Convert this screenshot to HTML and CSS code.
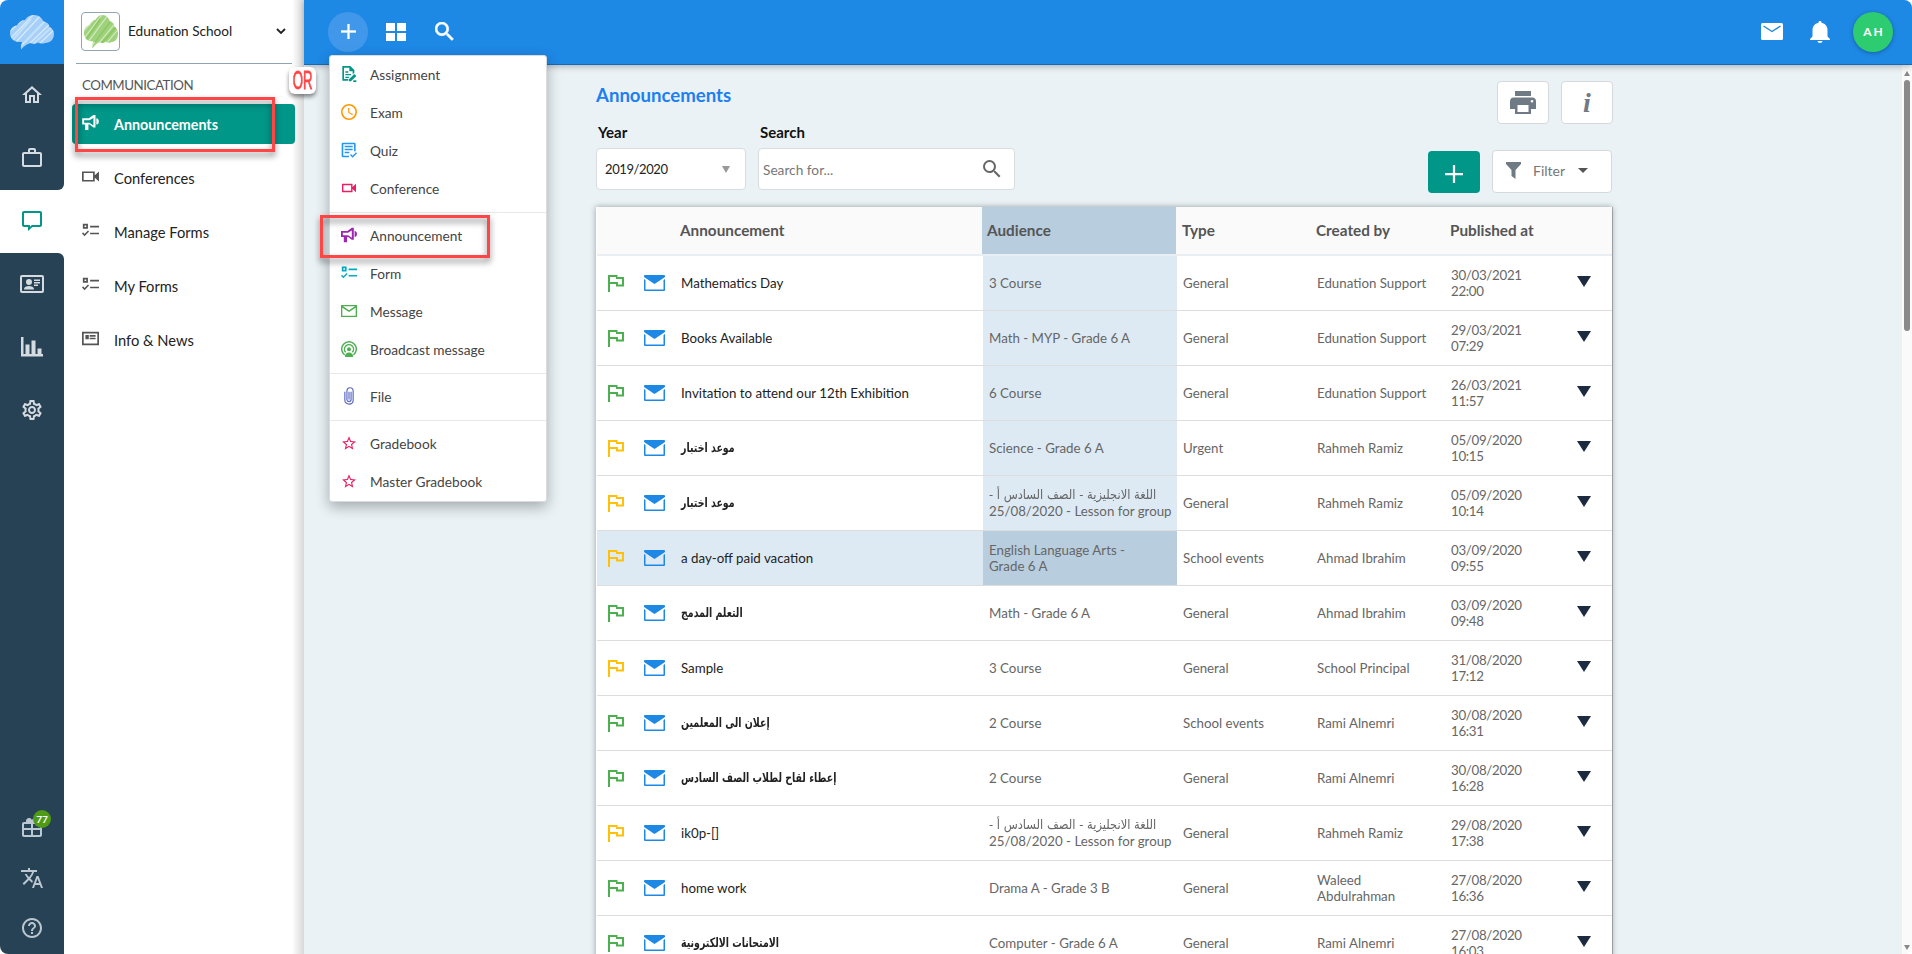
FILE: index.html
```
<!DOCTYPE html>
<html lang="en">
<head>
<meta charset="utf-8">
<title>Announcements</title>
<link rel="stylesheet" href="styles.css">
</head>
<body>
<svg class="defs" aria-hidden="true">
  <clipPath id="cloud-clip"><path d="M9 27C4 27 0 23 0 18.500C0 14 3 11 7 10.500C9 7 12 5 15 5C17 1.500 20 0 24 0C29 0 32 3 33.500 6.500C37 7 39 9 39.500 12C42.500 13.500 44 16 44 19C44 24 40.500 28 35 28C33 29 30 28.500 28 27.500C25 29.500 22 28.500 20 28C17 29 14.500 30.500 11 34.500C10.500 31 11.500 29 12 27Z"/></clipPath>
  <symbol id="cloud" viewBox="0 0 44 35" preserveAspectRatio="none"><g clip-path="url(#cloud-clip)"><path d="M0 0h44v35H0z" opacity=".82"/><path d="M-2 18L16 2M0 24L24 -1M6 27L31 0M8 34L38 3M17 31L41 8M28 30L45 14" fill="none" stroke="#fff" stroke-opacity=".55" stroke-width="1.300"/><path d="M3 25L21 4M14 28L36 5M23 29L43 11" fill="none" stroke="currentColor" stroke-width="2"/></g></symbol>
  <symbol id="home" viewBox="0 0 24 24"><path d="M12 5.700l5 4.500V18h-2v-6H9v6H7v-7.800l5-4.500M12 3L2 12h3v8h6v-6h2v6h6v-8h3L12 3z"/></symbol>
  <symbol id="case" viewBox="0 0 24 24"><path d="M14 6V4h-4v2h4zM4 8v11h16V8H4zm16-2c1.100 0 2 .900 2 2v11c0 1.100-.900 2-2 2H4c-1.100 0-2-.900-2-2V8c0-1.100.900-2 2-2h4V4c0-1.100.900-2 2-2h4c1.100 0 2 .900 2 2v2h4z"/></symbol>
  <symbol id="chat" viewBox="0 0 24 24"><path d="M20 2H4c-1.100 0-2 .900-2 2v12c0 1.100.900 2 2 2h4v4l4.500-4H20c1.100 0 2-.900 2-2V4c0-1.100-.900-2-2-2zm0 14h-8.200L10 17.800V16H4V4h16v12z"/></symbol>
  <symbol id="card" viewBox="0 0 24 20"><path fill-rule="evenodd" d="M2 1h20a2 2 0 0 1 2 2v14a2 2 0 0 1-2 2H2a2 2 0 0 1-2-2V3a2 2 0 0 1 2-2zm0 2v14h20V3zM9 5a3 3 0 1 1 0 6 3 3 0 0 1 0-6zM4 15c0-2 2.500-3 5-3s5 1 5 3v.500H4zM14 5.500h6V7h-6zm0 2.500h6v1.500h-6zm0 2.500h4V12h-4z"/></symbol>
  <symbol id="chart" viewBox="0 0 22 20"><path d="M0 0h2.500v17H4.500V7.500h4V17h2V3.500h4V17h2v-5.500h4V17H22v2.500H0z"/></symbol>
  <symbol id="gear" viewBox="0 0 24 24"><path d="M19.430 12.980c.040-.320.070-.640.070-.980s-.030-.660-.070-.980l2.110-1.650c.190-.150.240-.420.120-.640l-2-3.460c-.120-.220-.390-.300-.610-.220l-2.490 1c-.520-.400-1.080-.730-1.690-.980l-.380-2.650C14.460 2.180 14.250 2 14 2h-4c-.250 0-.460.180-.490.420l-.380 2.650c-.610.250-1.170.590-1.690.980l-2.490-1c-.230-.090-.490 0-.610.220l-2 3.460c-.130.220-.070.490.120.640l2.110 1.650c-.040.320-.070.650-.070.980s.030.660.070.980l-2.110 1.650c-.190.150-.240.420-.120.640l2 3.460c.120.220.390.300.610.220l2.490-1c.520.400 1.080.730 1.690.980l.380 2.650c.030.240.240.420.490.420h4c.250 0 .460-.180.490-.420l.380-2.650c.610-.250 1.170-.590 1.690-.980l2.490 1c.230.090.490 0 .610-.220l2-3.460c.120-.220.070-.490-.120-.640l-2.110-1.650zm-1.980-1.710c.040.310.050.520.050.730s-.020.430-.050.730l-.140 1.130.890.700 1.080.840-.700 1.210-1.270-.510-1.040-.420-.900.680c-.430.320-.840.560-1.250.730l-1.060.430-.160 1.130-.200 1.350h-1.400l-.350-2.480-1.060-.430c-.430-.180-.830-.410-1.230-.710l-.910-.700-1.060.430-1.270.510-.700-1.210 1.970-1.540-.140-1.130c-.030-.310-.050-.540-.050-.740s.020-.430.050-.730l.140-1.130-1.970-1.540.700-1.210 2.330.930.900-.680c.430-.320.840-.560 1.250-.730l1.060-.430.350-2.480h1.390l.350 2.480 1.060.430c.430.180.830.410 1.230.710l.910.700 2.330-.940.700 1.210-1.970 1.550.140 1.130zM12 8c-2.210 0-4 1.790-4 4s1.790 4 4 4 4-1.790 4-4-1.790-4-4-4zm0 6c-1.100 0-2-.900-2-2s.900-2 2-2 2 .900 2 2-.900 2-2 2z"/></symbol>
  <symbol id="gift" viewBox="0 0 24 24"><path d="M20 6h-2.180c.110-.310.180-.650.180-1a2.996 2.996 0 0 0-5.500-1.650l-.500.670-.500-.680C10.960 2.540 10.050 2 9 2 7.340 2 6 3.340 6 5c0 .350.070.690.180 1H4c-1.110 0-1.990.890-1.990 2L2 19c0 1.110.890 2 2 2h16c1.110 0 2-.890 2-2V8c0-1.110-.890-2-2-2zM4 8h7v4H4zm0 6h7v5H4zm16 5h-7v-5h7zm0-7h-7V8h7z"/></symbol>
  <symbol id="translate" viewBox="0 0 24 24"><path d="M12.870 15.070l-2.540-2.510.030-.030A17.520 17.520 0 0 0 14.070 6H17V4h-7V2H8v2H1v1.990h11.170C11.500 7.920 10.440 9.750 9 11.350 8.070 10.320 7.300 9.190 6.690 8h-2c.730 1.630 1.730 3.170 2.980 4.560l-5.090 5.020L4 19l5-5 3.110 3.110.760-2.040zM18.500 10h-2L12 22h2l1.120-3h4.750L21 22h2l-4.500-12zm-2.620 7l1.620-4.330L19.120 17h-3.240z"/></symbol>
  <symbol id="help" viewBox="0 0 24 24"><path d="M11 18h2v-2h-2v2zm1-16C6.480 2 2 6.480 2 12s4.480 10 10 10 10-4.480 10-10S17.520 2 12 2zm0 18c-4.410 0-8-3.590-8-8s3.590-8 8-8 8 3.590 8 8-3.590 8-8 8zm0-14c-2.210 0-4 1.790-4 4h2c0-1.100.900-2 2-2s2 .900 2 2c0 2-3 1.750-3 5h2c0-2.250 3-2.500 3-5 0-2.210-1.790-4-4-4z"/></symbol>
  <symbol id="horn" viewBox="0 0 20 18"><path fill-rule="evenodd" d="M0 4h8l5.500-4H16v15h-2.500L9 11.500H7.500V18h-4v-6.500H0zm2.300 2.300v3h6.500l4.700 3.200v-9L8.800 6.300zM17 4c4 0 4 7.500 0 7.500z"/></symbol>
  <symbol id="video" viewBox="0 0 20 14"><path fill-rule="evenodd" d="M0 1h15v4.500L20 1v12l-5-4.500V13H0zm2 2v8h11V3z"/></symbol>
  <symbol id="list" viewBox="0 0 20 16"><path fill-rule="evenodd" d="M1 0h6v6H1zm2 2v2h2V2zM9.500 2.500H20v2H9.500zm0 8H20v2H9.500zM0 11.500l1.300-1.300L3 12l4-4 1.300 1.300L3 14.700z"/></symbol>
  <symbol id="news" viewBox="0 0 20 16"><path fill-rule="evenodd" d="M0 0h20v16H0zm2 2v12h16V2zm2 2h4v5H4zm5 0h7v2H9zm0 3h7v2H9z"/></symbol>
  <symbol id="assign" viewBox="0 0 24 24"><path fill-rule="evenodd" d="M2 0h12l6 6v4l-2.500 2.500V8h-5V2.500h-8v17H11V22H2zm4.500 8H11v2H6.500zm0 4H15v2H6.500zm0 4H12v2H6.500zM12 20l8-8 3 3-8 8h-3zm7 1.500h4V24h-5z"/></symbol>
  <symbol id="clock" viewBox="0 0 24 24"><path d="M12 0a12 12 0 1 0 0 24 12 12 0 0 0 0-24zm0 21.600a9.600 9.600 0 1 1 0-19.200 9.600 9.600 0 0 1 0 19.200zM12.600 6h-1.800v7.200l6.200 3.800.900-1.500-5.300-3.200V6z"/></symbol>
  <symbol id="quiz" viewBox="0 0 24 24"><path fill-rule="evenodd" d="M3 1h17a2 2 0 0 1 2 2v11h-2.400V3.400H3.400v17.200H12V23H3a2 2 0 0 1-2-2V3a2 2 0 0 1 2-2zm2.500 4.500h12v2.200h-12zm0 4.500h12v2.200h-12zm0 4.500h7v2.200h-7zM13.500 19.500l1.500-1.500 2.500 2.500 5-5L24 17l-6.500 6.500z"/></symbol>
  <symbol id="mailo" viewBox="0 0 24 20"><path d="M0 1h24v18H0zm2 4v12h20V5l-10 6.500zm1-2l9 6 9-6z" fill-rule="evenodd"/></symbol>
  <symbol id="cast" viewBox="0 0 24 24"><path d="M5.500 21A11 11 0 1 1 18.500 21M7 17a6.800 6.800 0 1 1 10 0" fill="none" stroke="currentColor" stroke-width="2.200"/><circle cx="12" cy="12.500" r="3"/><path d="M6 24c-1-9 13-9 12 0z"/></symbol>
  <symbol id="clip" viewBox="0 0 14 26"><path d="M10 7v11c0 4-6 4-6 0V6c0-6.500 9-6.500 9 0v13c0 7.500-12 7.500-12 0V7M7 7v11" fill="none" stroke="currentColor" stroke-width="1.700"/></symbol>
  <symbol id="star" viewBox="2 2 20 19"><path d="M22 9.240l-7.190-.620L12 2 9.190 8.630 2 9.240l5.460 4.730L5.820 21 12 17.270 18.180 21l-1.630-7.030L22 9.240zM12 15.400l-3.760 2.270 1-4.280-3.320-2.880 4.380-.380L12 6.100l1.710 4.040 4.380.380-3.320 2.880 1 4.280L12 15.400z"/></symbol>
  <symbol id="search" viewBox="0 0 18 18"><path d="M12.500 11h-.790l-.280-.270A6.470 6.470 0 0 0 13 6.500 6.500 6.500 0 1 0 6.500 13c1.610 0 3.090-.590 4.230-1.570l.270.280v.790l5 4.990L17.490 16l-4.990-5zm-6 0a4.500 4.500 0 1 1 0-9 4.500 4.500 0 0 1 0 9z"/></symbol>
  <symbol id="plus" viewBox="0 0 16 16"><path d="M7 0h2v7h7v2H9v7H7V9H0V7h7z"/></symbol>
  <symbol id="flag" viewBox="0 0 16 17"><path fill-rule="evenodd" d="M0 0h9.500v2H16v9.500H8V9H2v8H0zm2 2v5h8v2.500h4V4H8V2z"/></symbol>
  <symbol id="mail" viewBox="0 0 21 16"><path d="M1 0h19a1 1 0 0 1 1 1v1L10.500 9 0 2V1a1 1 0 0 1 1-1zM0 4l1.500 1v9.500h18V5L21 4v11a1 1 0 0 1-1 1H1a1 1 0 0 1-1-1z"/></symbol>
</svg>
<div class="app">
  <nav class="rail">
    <div class="brand"><svg class="brand-cloud"><use href="#cloud"/></svg></div>
    <div class="rail-top"><a><svg><use href="#home"/></svg></a><a><svg><use href="#case"/></svg></a></div>
    <div class="rail-active"><svg><use href="#chat"/></svg></div>
    <div class="rail-rest">
      <a><svg><use href="#card"/></svg></a><a><svg class="i22"><use href="#chart"/></svg></a><a><svg><use href="#gear"/></svg></a>
      <div class="rail-foot">
        <a><svg><use href="#gift"/></svg><span class="count">77</span></a><a><svg><use href="#translate"/></svg></a><a><svg><use href="#help"/></svg></a>
      </div>
    </div>
  </nav>
  <aside class="side">
    <div class="school"><span class="school-logo"><svg><use href="#cloud"/></svg></span><span class="school-name">Edunation School</span>
      <svg class="chev" viewBox="0 0 10 7"><path d="M1 1l4 4 4-4" fill="none" stroke="#222" stroke-width="1.800"/></svg></div>
    <h2>COMMUNICATION</h2>
    <a class="nav on"><svg><use href="#horn"/></svg><span>Announcements</span></a>
    <a class="nav"><svg><use href="#video"/></svg><span>Conferences</span></a>
    <a class="nav"><svg><use href="#list"/></svg><span>Manage Forms</span></a>
    <a class="nav"><svg><use href="#list"/></svg><span>My Forms</span></a>
    <a class="nav"><svg><use href="#news"/></svg><span>Info &amp; News</span></a>
  </aside>
  <div class="main">
    <header class="top">
      <span class="round"><svg><use href="#plus"/></svg></span>
      <svg class="tiles" viewBox="0 0 20 18"><path d="M0 0h9v8H0zM11 0h9v8h-9zM0 10h9v8H0zM11 10h9v8h-9z"/></svg>
      <svg class="find"><use href="#search"/></svg>
      <svg class="tmail" viewBox="0 0 22 17"><rect width="22" height="17" rx="1.500" fill="#fff"/><path d="M2.500 3l8.500 5.500L19.500 3" fill="none" stroke="#1e88e5" stroke-width="1.400"/></svg>
      <svg class="bell" viewBox="0 0 20 22"><path d="M10 0c1 0 1.500.700 1.500 1.700 4 .8 6 3.800 6 7.300v6.500L20 18v1H0v-1l2.500-2.500V9c0-3.500 2-6.500 6-7.300C8.500.700 9 0 10 0zM7.500 20h5c0 2.500-5 2.500-5 0z"/></svg>
      <span class="avatar">AH</span>
    </header>
    <div class="content">
      <div class="page">
        <div class="titlebar"><h1>Announcements</h1>
          <span class="btn"><svg class="printer" viewBox="0 0 26 23"><path fill-rule="evenodd" d="M5 0h16v5H5zM4 6.500h18a4 4 0 0 1 4 4V18h-5v5H5v-5H0v-7.500a4 4 0 0 1 4-4zM7.500 14v7h11v-7zM22 9a1.300 1.300 0 1 0 0 2.600A1.300 1.300 0 0 0 22 9z"/></svg></span>
          <span class="btn info">i</span></div>
        <div class="tools">
          <label class="year"><b>Year</b><span class="field">2019/2020<i class="tri"></i></span></label>
          <label class="query"><b>Search</b><span class="field">Search for...<svg><use href="#search"/></svg></span></label>
          <span class="add"><svg><use href="#plus"/></svg></span>
          <span class="filter"><svg viewBox="0 0 15 17"><path d="M0 0h15v2L9.500 8v9L5.500 14V8L0 2z"/></svg>Filter<i></i></span>
        </div>
        <div class="table">
          <div class="row head"><span></span><span></span><span class="name">Announcement</span><span class="aud">Audience</span><span>Type</span><span>Created by</span><span>Published at</span><span></span></div>
          <div class="row hl"><svg class="flag"><use href="#flag"/></svg><svg class="mail"><use href="#mail"/></svg><span class="name">Mathematics Day</span><span class="aud">3 Course</span><span>General</span><span>Edunation Support</span><span class="date">30/03/2021<br>22:00</span><i></i></div>
          <div class="row hl"><svg class="flag"><use href="#flag"/></svg><svg class="mail"><use href="#mail"/></svg><span class="name">Books Available</span><span class="aud">Math - MYP - Grade 6 A</span><span>General</span><span>Edunation Support</span><span class="date">29/03/2021<br>07:29</span><i></i></div>
          <div class="row hl"><svg class="flag"><use href="#flag"/></svg><svg class="mail"><use href="#mail"/></svg><span class="name">Invitation to attend our 12th Exhibition</span><span class="aud">6 Course</span><span>General</span><span>Edunation Support</span><span class="date">26/03/2021<br>11:57</span><i></i></div>
          <div class="row hl"><svg class="flag amber"><use href="#flag"/></svg><svg class="mail"><use href="#mail"/></svg><span class="name"><b class="ar">موعد اختبار</b></span><span class="aud">Science - Grade 6 A</span><span>Urgent</span><span>Rahmeh Ramiz</span><span class="date">05/09/2020<br>10:15</span><i></i></div>
          <div class="row hl"><svg class="flag amber"><use href="#flag"/></svg><svg class="mail"><use href="#mail"/></svg><span class="name"><b class="ar">موعد اختبار</b></span><span class="aud"><span class="ar" dir="rtl">اللغة الانجليزية - الصف السادس أ -</span><span>25/08/2020 - Lesson for group</span></span><span>General</span><span>Rahmeh Ramiz</span><span class="date">05/09/2020<br>10:14</span><i></i></div>
          <div class="row sel"><svg class="flag amber"><use href="#flag"/></svg><svg class="mail"><use href="#mail"/></svg><span class="name">a day-off paid vacation</span><span class="aud"><span>English Language Arts -</span><span>Grade 6 A</span></span><span>School events</span><span>Ahmad Ibrahim</span><span class="date">03/09/2020<br>09:55</span><i></i></div>
          <div class="row"><svg class="flag"><use href="#flag"/></svg><svg class="mail"><use href="#mail"/></svg><span class="name"><b class="ar">التعلم المدمج</b></span><span class="aud">Math - Grade 6 A</span><span>General</span><span>Ahmad Ibrahim</span><span class="date">03/09/2020<br>09:48</span><i></i></div>
          <div class="row"><svg class="flag amber"><use href="#flag"/></svg><svg class="mail"><use href="#mail"/></svg><span class="name">Sample</span><span class="aud">3 Course</span><span>General</span><span>School Principal</span><span class="date">31/08/2020<br>17:12</span><i></i></div>
          <div class="row"><svg class="flag"><use href="#flag"/></svg><svg class="mail"><use href="#mail"/></svg><span class="name"><b class="ar">إعلان الى المعلمين</b></span><span class="aud">2 Course</span><span>School events</span><span>Rami Alnemri</span><span class="date">30/08/2020<br>16:31</span><i></i></div>
          <div class="row"><svg class="flag"><use href="#flag"/></svg><svg class="mail"><use href="#mail"/></svg><span class="name"><b class="ar">إعطاء لقاح لطلاب الصف السادس</b></span><span class="aud">2 Course</span><span>General</span><span>Rami Alnemri</span><span class="date">30/08/2020<br>16:28</span><i></i></div>
          <div class="row"><svg class="flag amber"><use href="#flag"/></svg><svg class="mail"><use href="#mail"/></svg><span class="name">ik0p-[]</span><span class="aud"><span class="ar" dir="rtl">اللغة الانجليزية - الصف السادس أ -</span><span>25/08/2020 - Lesson for group</span></span><span>General</span><span>Rahmeh Ramiz</span><span class="date">29/08/2020<br>17:38</span><i></i></div>
          <div class="row"><svg class="flag"><use href="#flag"/></svg><svg class="mail"><use href="#mail"/></svg><span class="name">home work</span><span class="aud">Drama A - Grade 3 B</span><span>General</span><span>Waleed<br>Abdulrahman</span><span class="date">27/08/2020<br>16:36</span><i></i></div>
          <div class="row"><svg class="flag"><use href="#flag"/></svg><svg class="mail"><use href="#mail"/></svg><span class="name"><b class="ar">الامتحانات الالكترونية</b></span><span class="aud">Computer - Grade 6 A</span><span>General</span><span>Rami Alnemri</span><span class="date">27/08/2020<br>16:03</span><i></i></div>
        </div>
      </div>
      <div class="scroll"><i class="up"></i><i class="thumb"></i><i class="down"></i></div>
    </div>
  </div>
</div>
<div class="menu">
  <a class="teal"><svg><use href="#assign"/></svg>Assignment</a>
  <a class="orange"><svg><use href="#clock"/></svg>Exam</a>
  <a class="blue"><svg><use href="#quiz"/></svg>Quiz</a>
  <a class="pink"><svg class="small"><use href="#video"/></svg>Conference</a>
  <hr>
  <a class="purple"><svg><use href="#horn"/></svg>Announcement</a>
  <a class="cyan"><svg><use href="#list"/></svg>Form</a>
  <a class="green"><svg><use href="#mailo"/></svg>Message</a>
  <a class="green"><svg><use href="#cast"/></svg>Broadcast message</a>
  <hr>
  <a class="indigo"><svg class="tall"><use href="#clip"/></svg>File</a>
  <hr>
  <a class="pink"><svg class="small"><use href="#star"/></svg>Gradebook</a>
  <a class="pink"><svg class="small"><use href="#star"/></svg>Master Gradebook</a>
</div>
<div class="mark mark-side"></div>
<div class="mark mark-menu"></div>
<div class="or"><span>OR</span></div>
</body>
</html>
```

FILE: styles.css
```
* { box-sizing: border-box; }
body { margin: 0; width: 1912px; height: 954px; overflow: hidden; font-family: Lato, "DejaVu Sans", sans-serif; font-size: 14px; color: #333; background: #fff; }
svg { fill: currentColor; flex: none; display: block; }
.defs { position: absolute; width: 0; height: 0; }
.app { display: flex; height: 954px; border-radius: 8px; overflow: hidden; }

.rail { width: 64px; display: flex; flex-direction: column; color: #d5dbe0; background: #fff; }
.rail svg { width: 24px; height: 24px; }
.rail .i22 { width: 22px; height: 20px; }
.rail a, .rail-active { height: 63px; display: flex; align-items: center; justify-content: center; padding-bottom: 2px; }
.brand { height: 64px; background: #1e88e5; display: flex; align-items: center; justify-content: center; color: #c5e1fa; }
.rail .brand-cloud { width: 44px; height: 35px; }
.rail-top { background: #284255; border-bottom-right-radius: 6px; }
.rail-active { color: #009688; }
.rail-rest { flex: 1; background: #284255; border-top-right-radius: 6px; display: flex; flex-direction: column; }
.rail-foot { margin-top: auto; color: #bcc8d1; }
.rail-foot a { height: 50px; position: relative; }
.count { position: absolute; left: 33px; top: 6px; width: 18px; height: 18px; border-radius: 9px; background: #4f9a16; color: #fff; font-size: 10px; font-weight: 700; line-height: 18px; text-align: center; }

.side { width: 240px; padding: 0 9px 0 8px; background: linear-gradient(90deg, #fff 228px, #d8d8d8 240px); }
.school { height: 64px; margin: 0 3px 0 4px; border-bottom: 1px solid #90a4b4; display: flex; align-items: center; padding: 0 5px; }
.school-logo { width: 39px; height: 39px; border: 1px solid #90a4b4; border-radius: 4px; display: flex; align-items: center; justify-content: center; color: #8bc860; margin-right: 8px; }
.school-logo svg { width: 34px; height: 34px; }
.school-name { flex: 1; color: #222; font-size: 13.600px; padding-bottom: 1px; }
.chev { width: 10px; height: 7px; margin-right: 1px; }
.side h2 { margin: 0; padding-left: 10px; height: 40px; line-height: 43px; font-size: 13.300px; letter-spacing: -.45px; font-weight: 400; color: #555; }
.nav { display: flex; align-items: center; height: 40px; padding-left: 10px; border-radius: 4px; margin-bottom: 14px; color: #222; font-size: 14.700px; }
.nav svg { width: 17px; height: 15px; margin: 0 15px 3px 0; color: #555; }
.nav.on { background: #009688; color: #fff; font-weight: 700; font-size: 14.300px; }
.nav.on svg { color: #fff; }

.main { flex: 1; display: flex; flex-direction: column; background: #eaf2f6; }
.top { height: 65px; background: #1e88e5; border-bottom: 1px solid #1669b4; box-shadow: 0 2px 6px rgba(0,0,0,.25); display: flex; align-items: center; color: #fff; padding: 0 19px 1px 24px; z-index: 1; }
.round { width: 40px; height: 40px; border-radius: 20px; background: #4198ea; display: flex; align-items: center; justify-content: center; margin-right: 18px; }
.round svg { width: 15px; height: 15px; stroke: #fff; stroke-width: .4; }
.tiles { width: 20px; height: 18px; margin-right: 29px; }
.find { width: 19px; height: 19px; margin-right: auto; stroke: #fff; stroke-width: .6; }
.tmail { width: 22px; height: 17px; margin-right: 27px; }
.bell { width: 20px; height: 22px; margin-right: 23px; }
.avatar { width: 40px; height: 40px; border-radius: 20px; background: #2ecc71; font-size: 12px; font-weight: 700; letter-spacing: 2px; padding-left: 2px; line-height: 40px; text-align: center; box-shadow: 0 1px 4px rgba(0,0,0,.3); }

.content { flex: 1; display: flex; justify-content: space-between; min-height: 0; }
.page { width: 1017px; margin-left: 292px; }
.titlebar { display: flex; padding-top: 16px; height: 60px; gap: 12px; }
.titlebar h1 { margin: 2px auto 0 0; font-size: 18.600px; line-height: 24px; font-weight: 700; color: #1d7ff0; }
.btn { width: 52px; height: 43px; border: 1px solid #d5d9dc; border-radius: 4px; background: #fff; color: #6f7a85; display: flex; align-items: center; justify-content: center; }
.printer { width: 26px; height: 23px; }
.info { font: italic 700 28px "Liberation Serif", serif; }
.tools { display: flex; align-items: flex-end; height: 65px; padding-right: 1px; }
.year { width: 150px; margin-right: 12px; }
.query { width: 257px; margin-right: auto; }
.tools b { display: block; font-size: 15px; line-height: 18px; padding-left: 2px; margin-bottom: 7px; color: #111; }
.field { display: flex; align-items: center; height: 42px; border: 1px solid #d9dcde; border-radius: 4px; background: #fff; color: #222; padding: 0 15px 0 8px; }
.year .field { font-size: 13px; letter-spacing: -.4px; }
.query .field { color: #777; padding: 0 13px 0 4px; font-size: 13.700px; }
.query svg { width: 18px; height: 18px; margin-left: auto; color: #666; }
.tri { margin-left: auto; border: 4px solid transparent; border-top: 7px solid #999; border-bottom: 0; }
.add { width: 52px; height: 42px; margin: 0 12px -3px 0; border-radius: 4px; background: #009688; color: #fff; display: flex; align-items: center; justify-content: center; }
.add svg { width: 18px; height: 18px; margin-top: 3px; }
.filter { width: 120px; height: 43px; margin-bottom: -3px; border: 1px solid #d5d9dc; border-radius: 4px; background: #fff; color: #777; display: flex; align-items: center; padding: 0 0 2px 13px; }
.filter svg { width: 15px; height: 17px; margin-right: 12px; color: #6f7a85; }
.filter i { margin-left: 13px; border: 5px solid transparent; border-top-color: #555; border-bottom: 0; }

.table { margin-top: 17px; background: #fff; box-shadow: 0 0 6px rgba(0,0,0,.35), 1px 0 0 #b8bcc0; width: 1016px; padding-left: 1px; height: 763px; }
.row { display: grid; grid-template-columns: 36px 42px 308px 194px 134px 134px 118px 49px; height: 55px; align-items: center; border-bottom: 1px solid #ddd; font-size: 13.300px; line-height: 16px; color: #666; }
.row > span { padding-left: 6px; padding-bottom: 1px; }
.row .name { color: #222; }
.row > .aud { align-self: stretch; display: flex; flex-direction: column; justify-content: center; align-items: flex-start; white-space: nowrap; }
.hl .aud { background: #ddeaf4; }
.head { height: 49px; border-bottom: 2px solid #e9eef2; background: #fafafa; font-size: 15.300px; font-weight: 700; color: #555; }
.row.head > span { padding: 0 0 2px 5px; color: #555; }
.head > .aud { background: #b8cdde; margin: 0 1px 0 -1px; }
.sel { background: linear-gradient(90deg, #ddeaf4 580px, #fff 580px); }
.sel .aud { background: #b8cdde; }
.date { letter-spacing: -.3px; }
.flag { width: 16px; height: 17px; margin-left: 11px; color: #4caf50; }
.amber { color: #ffc107; }
.mail { width: 21px; height: 16px; margin-left: 11px; color: #1e88e5; }
.row > i { justify-self: start; margin: 0 0 3px 14px; border: 7.500px solid transparent; border-top: 11px solid #1c2b40; border-bottom: 0; }
.ar { display: inline-block; font-family: "DejaVu Sans", sans-serif; font-size: 13px; line-height: 16px; white-space: nowrap; transform: scaleX(.725); transform-origin: left; }
.aud .ar { transform: scaleX(.885); }

.scroll { width: 10px; background: #fafafa; display: flex; flex-direction: column; align-items: center; padding: 6px 0 4px; }
.up { border: 3px solid transparent; border-bottom: 5px solid #888; border-top: 0; margin-bottom: 4px; }
.thumb { width: 6px; height: 251px; border-radius: 3px; background: #8a8a8a; }
.down { margin-top: auto; border: 3px solid transparent; border-top: 5px solid #888; border-bottom: 0; }

.menu { position: absolute; left: 329px; top: 55px; width: 218px; height: 447px; background: #fff; border: 1px solid #d8dcdf; border-radius: 3px; box-shadow: 0 5px 14px rgba(0,0,0,.3); z-index: 2; }
.menu a { height: 38px; display: flex; align-items: center; padding: 0 0 2px 11px; gap: 13px; color: #444; font-size: 13.700px; }
.menu svg { width: 16px; height: 16px; }
.menu svg.small { width: 14px; height: 14px; margin: 0 1px; }
.menu svg.tall { height: 18px; }
.menu hr { margin: 4px 0; border: 0; height: 1px; background: #e8e8e8; }
.menu .teal svg { color: #009688; } .menu .orange svg { color: #ff9800; } .menu .blue svg { color: #2196f3; }
.menu .pink svg { color: #e91e63; } .menu .purple svg { color: #9c27b0; } .menu .cyan svg { color: #00acc1; }
.menu .green svg { color: #4caf50; } .menu .indigo svg { color: #5c6bc0; }
.mark { position: absolute; border: 3px solid #ff4545; filter: drop-shadow(0 4px 3px rgba(0,0,0,.5)); z-index: 3; }
.mark-side { left: 75px; top: 97px; width: 200px; height: 55px; }
.mark-menu { left: 320px; top: 215px; width: 170px; height: 43px; }
.or { position: absolute; left: 289px; top: 67px; width: 27px; height: 27px; border-radius: 6px; background: #fff; color: #ff4545; font: 400 25px/27px "Liberation Sans", sans-serif; display: flex; justify-content: center; filter: drop-shadow(0 3px 2px rgba(0,0,0,.45)); z-index: 3; }
.or span { transform: scaleX(.53); -webkit-text-stroke: .8px #ff4545; }
```
